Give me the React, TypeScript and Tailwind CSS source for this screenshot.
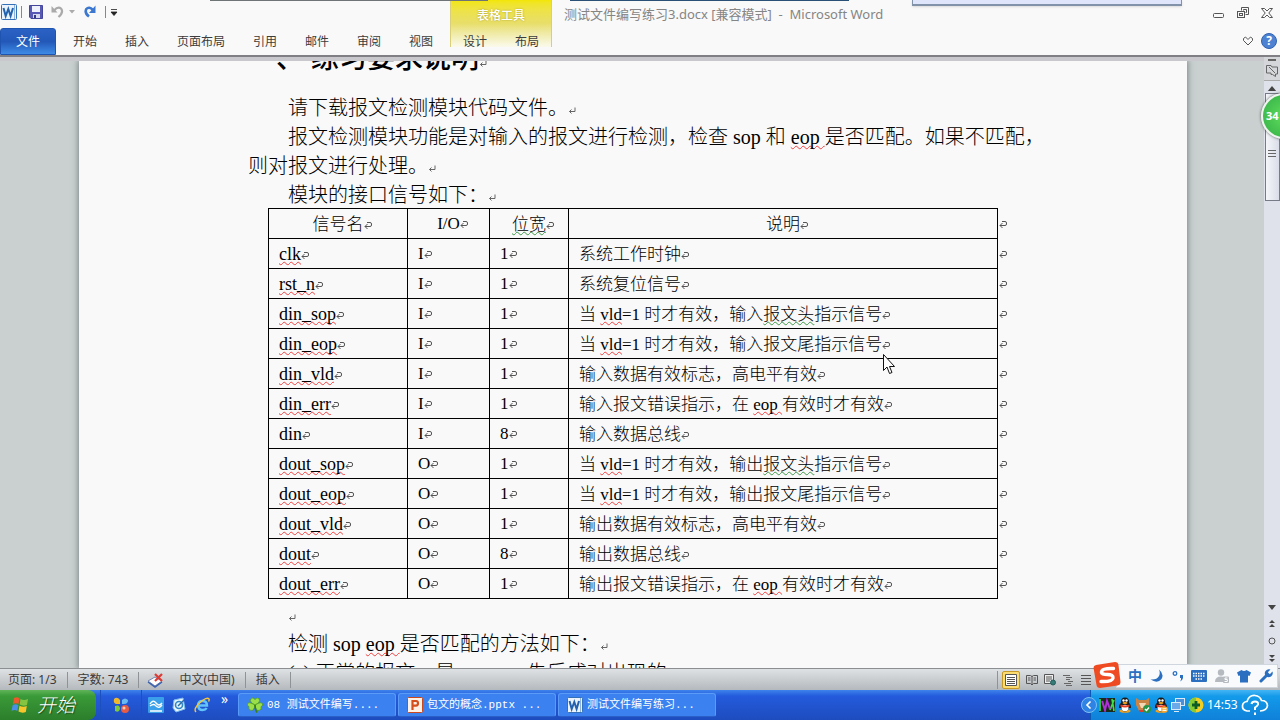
import React from "react";

type Mark = "red" | "green";
type Piece = string | { text: string; mark: Mark };

interface SignalRow {
  name: Piece;
  io: string;
  width: string;
  note: Piece[];
}

const vld: Piece = { text: "vld", mark: "red" };
const eop: Piece = { text: "eop ", mark: "red" };
const red = (text: string): Piece => ({ text, mark: "red" });
const head: Piece = { text: "报文头", mark: "green" };

const signals: SignalRow[] = [
  { name: red("clk"), io: "I", width: "1", note: ["系统工作时钟"] },
  { name: red("rst_n"), io: "I", width: "1", note: ["系统复位信号"] },
  { name: red("din_sop"), io: "I", width: "1", note: ["当 ", vld, "=1 时才有效，输入", head, "指示信号"] },
  { name: red("din_eop"), io: "I", width: "1", note: ["当 ", vld, "=1 时才有效，输入报文尾指示信号"] },
  { name: red("din_vld"), io: "I", width: "1", note: ["输入数据有效标志，高电平有效"] },
  { name: red("din_err"), io: "I", width: "1", note: ["输入报文错误指示，在 ", eop, "有效时才有效"] },
  { name: "din", io: "I", width: "8", note: ["输入数据总线"] },
  { name: red("dout_sop"), io: "O", width: "1", note: ["当 ", vld, "=1 时才有效，输出", head, "指示信号"] },
  { name: red("dout_eop"), io: "O", width: "1", note: ["当 ", vld, "=1 时才有效，输出报文尾指示信号"] },
  { name: red("dout_vld"), io: "O", width: "1", note: ["输出数据有效标志，高电平有效"] },
  { name: red("dout"), io: "O", width: "8", note: ["输出数据总线"] },
  { name: red("dout_err"), io: "O", width: "1", note: ["输出报文错误指示，在 ", eop, "有效时才有效"] },
];

const markStyles: Record<Mark, string> = {
  red: "underline decoration-wavy decoration-1 decoration-[#f04040] underline-offset-1 [text-decoration-skip-ink:none]",
  green: "underline decoration-wavy decoration-1 decoration-[#3f9a4a] underline-offset-1 [text-decoration-skip-ink:none]",
};

const Text = ({ piece }: { piece: Piece }) =>
  typeof piece === "string" ? <>{piece}</> : <span className={markStyles[piece.mark]}>{piece.text}</span>;

// Paragraph mark at the end of a line
const Return = () => (
  <svg viewBox="0 0 8 8" className="inline-block size-2 align-baseline" fill="none" stroke="#666">
    <path d="M7 0.5V4.5H1.5M3.5 2.5L1.5 4.5L3.5 6.5" />
  </svg>
);

// End-of-cell mark used inside tables
const CellMark = () => (
  <svg viewBox="0 0 8 8" className="inline-block size-2 align-baseline" fill="none" stroke="#555">
    <path d="M3 0.5H6Q7.5 0.5 7.5 2V3Q7.5 4.500 6 4.500H1M3.500 2L1 4.500L3.500 7" />
  </svg>
);

const WordIcon = () => (
  <svg viewBox="0 0 16 16" className="size-4 shrink-0">
    <rect x="0.5" y="0.5" width="15" height="15" rx="1" fill="#eaf2fb" stroke="#3470b8" />
    <path d="M13.500 1V15" stroke="#8db2de" />
    <path d="M2.500 4L4.700 12L7.300 5L9.600 12L12 4" fill="none" stroke="#2262ae" strokeWidth="2" />
  </svg>
);

const PowerPointIcon = () => (
  <svg viewBox="0 0 16 16" className="size-4 shrink-0">
    <rect x="0.5" y="0.5" width="15" height="15" rx="1" fill="#fff1e5" stroke="#c9481d" />
    <path d="M5.5 13V4H9Q11 4 11 6.3Q11 8.6 9 8.6H6" fill="none" stroke="#d4501e" strokeWidth="2.2" />
  </svg>
);

const CloverIcon = () => (
  <svg viewBox="0 0 16 16" className="size-4 shrink-0">
    <g fill="#9be04a" stroke="#4a9a1a" strokeWidth="0.7">
      <path d="M8 8Q2 5 3.800 2Q6 -0.500 8 2.500Q10 -0.500 12.200 2Q14 5 8 8Z" />
      <path d="M8 8Q1 4 0.500 7Q0 9 2 9.600Q1 13 4 13.400Q7 14 8 8Z" />
      <path d="M8 8Q15 4 15.500 7Q16 9 14 9.600Q15 13 12 13.400Q9 14 8 8Z" />
    </g>
    <path d="M8 8Q8 13 10 15.5" fill="none" stroke="#3b7d12" strokeWidth="1.5" />
  </svg>
);

const tabs = ["开始", "插入", "页面布局", "引用", "邮件", "审阅", "视图"];

const Tab = ({ label }: { label: string }) => (
  <button type="button" className="h-full px-[14px] text-xs text-[#3c3c3c]">
    {label}
  </button>
);

const Header = () => (
  <header className="relative flex h-[57px] shrink-0 border-b-2 border-[#808084] bg-[#f9f9f9] whitespace-nowrap">
    <div className="absolute top-0 left-[570px] h-px w-[279px] bg-[#2b5078]" />
    <div className="absolute top-0 left-[912px] h-1.5 w-[270px] border-x border-b-2 border-[#8292a8] bg-[#dfe5fb] shadow-sm" />

    <div className="flex w-[450px] shrink-0 flex-col">
      <div className="mb-1 flex h-6 items-center pl-px">
        <WordIcon />
        <span className="ml-1 h-3 w-px bg-[#888]" />
        <button type="button" aria-label="保存" className="ml-[7px]">
          <svg viewBox="0 0 14 14" className="size-[14px]">
            <path d="M0.5 0.5H13.5V13.5H2L0.5 12Z" fill="#5759b5" stroke="#44469a" />
            <path d="M3 1H11V7H3Z" fill="#eef0fb" />
            <path d="M4 9H11V13H4Z" fill="#d6d9ee" />
            <path d="M5 10H7V13H5Z" fill="#34367e" />
          </svg>
        </button>
        <button type="button" aria-label="撤消" className="ml-2">
          <svg viewBox="0 0 14 14" className="size-[14px]" fill="none" stroke="#aaa" strokeWidth="2.2">
            <path d="M3 5.5Q7 1 10 3.5Q13 7 7.5 12" />
            <path d="M0.5 1V7.5H6.5Z" fill="#aaa" stroke="none" />
          </svg>
        </button>
        <svg viewBox="0 0 6 4" className="ml-1 h-1 w-1.5"><path d="M0 0H6L3 3.5Z" fill="#aaa" /></svg>
        <button type="button" aria-label="恢复" className="ml-2">
          <svg viewBox="0 0 14 14" className="size-[14px]" fill="none" stroke="#3c78cf" strokeWidth="2.6">
            <path d="M10 5Q6 1 3.3 4Q1.3 8 6 11.5" />
            <path d="M12.5 0.5V8H6Z" fill="#3c78cf" stroke="none" />
          </svg>
        </button>
        <span className="ml-2 h-3 w-px bg-[#888]" />
        <button type="button" aria-label="自定义快速访问工具栏" className="ml-1">
          <svg viewBox="0 0 8 8" className="size-2"><path d="M1 1.5H7M1 4H7L4 7.5Z" fill="#222" stroke="#222" strokeWidth="0.8" /></svg>
        </button>
      </div>
      <div className="flex min-h-0 flex-1">
        <button
          type="button"
          className="mr-[3px] w-14 rounded-t-[3px] border border-[#1f55b0] bg-linear-to-b from-[#2a62c4] via-[#2358b8] to-[#3f8be6] text-xs text-white"
        >
          文件
        </button>
        <nav className="flex">
          {tabs.map((label) => (
            <Tab key={label} label={label} />
          ))}
        </nav>
      </div>
    </div>

    <div className="mb-2 flex w-[102px] shrink-0 flex-col border-x border-[#d9cf78] bg-linear-to-b from-[#f2e600] via-[#e8de6a] to-[#fbfaec]">
      <span className="h-7 shrink-0 pt-1 text-center text-xs leading-6 font-medium text-white [text-shadow:0_0_2px_#a69a2a]">表格工具</span>
      <div className="-mx-px flex h-[27px] shrink-0 justify-center">
        <Tab label="设计" />
        <Tab label="布局" />
      </div>
    </div>
    <div className="absolute top-0 left-[210px] h-px w-[278px] bg-[#6f7576]" />

    <h1 className="flex-1 pl-3 text-[13px] leading-7 text-[#858585]">测试文件编写练习3.docx [兼容模式]&nbsp; -&nbsp; Microsoft Word</h1>

    <div className="flex flex-col items-end pr-[3px]">
      <div className="mr-1 flex h-[26px] items-center gap-3">
        <button type="button" aria-label="最小化">
          <svg viewBox="0 0 12 12" className="size-3" fill="none" stroke="#555"><rect x="0.5" y="6.5" width="10" height="4" rx="1" /></svg>
        </button>
        <button type="button" aria-label="还原">
          <svg viewBox="0 0 12 12" className="size-3" fill="none" stroke="#555">
            <path d="M4.5 3.5V0.5H11.5V7.5H8.5M6.5 3.5V2.5H9.5V5.5H8.5" />
            <rect x="0.5" y="4.5" width="7" height="6" /><rect x="2.5" y="6.5" width="3" height="2" />
          </svg>
        </button>
        <button type="button" aria-label="关闭">
          <svg viewBox="0 0 12 12" className="size-3" fill="none" stroke="#555">
            <path d="M0.5 1.5H3.5L6 4L8.5 1.5H11.5L7.8 6L11.5 10.5H8.5L6 8L3.5 10.5H0.5L4.2 6Z" />
          </svg>
        </button>
      </div>
      <div className="flex flex-1 items-center gap-2">
        <button type="button" aria-label="功能区最小化">
          <svg viewBox="0 0 10 10" className="size-[10px]" fill="none" stroke="#555">
            <path d="M0.5 2.5L2.5 1L5 3.5L7.5 1L9.5 2.5V4.5L5 9L0.5 4.5Z" />
          </svg>
        </button>
        <button type="button" aria-label="帮助" className="size-4 rounded-full border border-[#2f62b0] bg-[#4d82d2] text-xs leading-[14px] font-bold text-white">
          ?
        </button>
      </div>
    </div>
  </header>
);

const SignalTable = () => (
  <table className="-mt-0.5 ml-5 border-collapse text-[17px] leading-none">
    <colgroup>
      <col className="w-[139px]" />
      <col className="w-[82px]" />
      <col className="w-[79px]" />
      <col className="w-[429px]" />
      <col className="w-3" />
    </colgroup>
    <thead>
      <tr className="h-[30px]">
        <th className="border border-black p-0 pt-0.5 pl-2 font-light">信号名<CellMark /></th>
        <th className="border border-black p-0 pl-2 font-light">I/O<CellMark /></th>
        <th className="border border-black p-0 pt-0.5 pl-2 font-light">
          <Text piece={{ text: "位宽", mark: "green" }} /><CellMark />
        </th>
        <th className="border border-black p-0 pt-0.5 pl-2 font-light">说明<CellMark /></th>
        <td className="p-0 pl-px"><CellMark /></td>
      </tr>
    </thead>
    <tbody>
      {signals.map((row, i) => (
        <tr key={i} className="h-[30px]">
          <td className="border border-black p-0 pl-[10px] text-lg leading-none"><Text piece={row.name} /><CellMark /></td>
          <td className="border border-black p-0 pl-[10px]">{row.io}<CellMark /></td>
          <td className="border border-black p-0 pl-[10px]">{row.width}<CellMark /></td>
          <td className="border border-black p-0 pt-0.5 pl-[10px]">
            {row.note.map((piece, n) => (
              <Text key={n} piece={piece} />
            ))}
            <CellMark />
          </td>
          <td className="p-0 pl-px"><CellMark /></td>
        </tr>
      ))}
    </tbody>
  </table>
);

const Document = () => (
  <article className="mr-[77px] ml-[79px] min-w-0 flex-1 overflow-hidden bg-[#f9f9f9] pl-[169px] font-['Liberation_Serif','Noto_Sans_CJK_SC',serif] text-xl leading-[29px] font-light whitespace-nowrap text-black shadow-[0_0_6px_1px_#7d8588]">
    <h2 className="-mt-4 mb-[21px] text-[28px] leading-7 font-medium">一、 练习要求说明<Return /></h2>
    <p className="indent-10">请下载报文检测模块代码文件。<Return /></p>
    <p className="indent-10">
      报文检测模块功能是对输入的报文进行检测，检查 sop 和 <Text piece={eop} />是否匹配。如果不匹配，
      <br />
      则对报文进行处理。<Return />
    </p>
    <p className="indent-10">模块的接口信号如下：<Return /></p>
    <SignalTable />
    <p className="mt-0.5 indent-10"><Return /></p>
    <p className="indent-10">检测 sop <Text piece={eop} />是否匹配的方法如下：<Return /></p>
    <p className="indent-10">(a) 正常的报文，是 sop eop 先后成对出现的</p>
  </article>
);

const ScrollBar = () => (
  <div className="relative flex w-4 shrink-0 flex-col items-center bg-[#dfe2ea]">
    <div className="flex h-6 w-full flex-col items-center gap-1 border-b border-[#aaa] bg-[#d5d6da] pt-0.5">
      <span className="h-0.5 w-2 shrink-0 bg-[#666]" />
      <svg viewBox="0 0 12 12" className="size-3 shrink-0" fill="none" stroke="#666">
        <path d="M0.5 0.5H5L6 2H11.5V9H9.5V11.5L6.5 9.5H5V8H0.5ZM3 2L9 8" />
      </svg>
    </div>
    <svg viewBox="0 0 10 6" className="mt-[5px] h-[5px] w-[10px]"><path d="M0 6L5 0L10 6Z" fill="#444" /></svg>
    <div className="mt-0.5 flex h-[108px] w-[15px] flex-col items-center justify-center gap-0.5 border border-[#777b88] bg-linear-to-r from-[#f5f6fa] to-[#d9dde8]">
      <span className="mt-3 h-px w-2 bg-[#666]" />
      <span className="h-px w-2 bg-[#666]" />
      <span className="h-px w-2 bg-[#666]" />
    </div>
    <div className="mt-auto flex flex-col items-center gap-[10px] pb-1.5">
      <svg viewBox="0 0 8 5" className="h-[5px] w-2"><path d="M0 0H8L4 5Z" fill="#444" /></svg>
      <svg viewBox="0 0 6 7" className="h-[7px] w-1.5"><path d="M0 3L3 0L6 3ZM0 7L3 4L6 7Z" fill="#444" /></svg>
      <svg viewBox="0 0 8 8" className="size-2" fill="none" stroke="#555"><circle cx="4" cy="4" r="3" /></svg>
      <svg viewBox="0 0 6 7" className="h-[7px] w-1.5"><path d="M0 0H6L3 3ZM0 4H6L3 7Z" fill="#444" /></svg>
    </div>
    <div className="absolute top-9 -left-[3px] flex h-[46px] w-[46px] items-center rounded-full border-2 border-[#eef4ee] bg-radial from-[#5fdc5c] to-[#2fae46] pl-[3px] text-[11px] font-bold text-white shadow-[0_0_3px_#555]">
      34
    </div>
  </div>
);

const StatusBar = () => (
  <footer className="flex h-[22px] shrink-0 items-center border-t border-[#8b8f92] bg-linear-to-b from-[#dfe2e4] to-[#b4b9bd] text-xs whitespace-nowrap text-[#3a3a3a]">
    <span className="pr-[10px] pl-2">页面: 1/3</span>
    <span className="border-x border-[#8f9397] px-[10px] leading-4">字数: 743</span>
    <svg viewBox="0 0 18 16" className="ml-2 h-4 w-[18px]">
      <path d="M1 9L8 5L15 9L8 14Z" fill="#fff" stroke="#7286b4" />
      <path d="M1 10L8 15L15 10" fill="none" stroke="#3c62ae" strokeWidth="1.5" />
      <path d="M8 2L15 9M15 2L8 9" stroke="#dd3b35" strokeWidth="2.2" />
    </svg>
    <span className="ml-3.5 border-r border-[#8f9397] pr-[10px] leading-4">中文(中国)</span>
    <span className="border-r border-[#8f9397] px-[10px] leading-4">插入</span>
    <div className="ml-auto flex items-center gap-1.5 border-l border-[#8f9397] pr-[188px] pl-1">
      <button type="button" aria-label="页面视图" className="flex size-[18px] items-center justify-center rounded-xs border border-[#c79a28] bg-[#fbdc73]">
        <svg viewBox="0 0 12 12" className="size-3" stroke="#555"><path d="M0.5 0.5H11.5V11.5H0.5Z" fill="#fff" /><path d="M2 3.5H10M2 5.5H10M2 7.5H10M2 9.5H10" /></svg>
      </button>
      <button type="button" aria-label="阅读版式视图">
        <svg viewBox="0 0 12 12" className="size-3" fill="none" stroke="#555"><path d="M0.5 1.5H4.5L6 2.5L7.5 1.5H11.5V9.5H7.5L6 11L4.5 9.5H0.5ZM6 2V10M2 4H4.5M2 6H4.5M7.5 4H10M7.5 6H10" /></svg>
      </button>
      <button type="button" aria-label="Web 版式视图">
        <svg viewBox="0 0 12 12" className="size-3" stroke="#555"><path d="M0.5 0.5H9.5V9.5H0.5Z" fill="#eee" /><path d="M2 3H8M2 5H8M2 7H6" /><circle cx="9" cy="8.5" r="2.5" fill="#357b78" stroke="#275d5b" /></svg>
      </button>
      <button type="button" aria-label="大纲视图">
        <svg viewBox="0 0 12 12" className="size-3" stroke="#666"><path d="M1 1.5H8M4 3.5H10M4 5.5H8M6 7.5H11M2 9.5H9M4 11.5H10" /></svg>
      </button>
      <button type="button" aria-label="草稿">
        <svg viewBox="0 0 12 12" className="size-3" stroke="#555"><path d="M1 1.5H11M1 4.5H11M1 7.5H11M1 10.5H11" /></svg>
      </button>
    </div>
  </footer>
);

// Floating input-method bar above the tray
const InputMethodBar = () => (
  <div className="absolute right-0.5 bottom-8 flex h-6 w-[162px] items-center justify-between border border-[#cfd6de] bg-[#f8fafc] pr-1 pl-[11px] text-[#2a6fc0]">
    <svg viewBox="0 0 28 28" className="absolute -top-1 -left-6 size-7">
      <path d="M3 4L22 1Q25 1 25.5 4L27.5 21Q27.500 24 24.500 24.500L7 27Q4 27 3.500 24L0.500 7Q0.500 4.500 3 4Z" fill="#ee4b22" />
      <path d="M20.500 7.500Q8 7 8.500 11.500Q9 13.500 14.500 13.500Q20.500 13.500 20 17Q19.500 21 8 20.500" fill="none" stroke="#fff" strokeWidth="3.400" strokeLinecap="round" />
    </svg>
    <span className="text-sm leading-none font-bold">中</span>
    <svg viewBox="0 0 14 14" className="size-[14px]"><path d="M9 0.500Q14.500 5 11.500 10Q7.500 15 0.500 10.500Q7 11 9 7Q10.500 4 9 0.500Z" fill="currentColor" /></svg>
    <svg viewBox="0 0 12 12" className="size-3"><circle cx="3" cy="3.500" r="1.800" fill="none" stroke="currentColor" strokeWidth="1.300" /><path d="M8 5H11V8Q10.500 10.500 8 11.500Q9.500 9.500 9 8H8Z" fill="currentColor" /></svg>
    <svg viewBox="0 0 16 12" className="h-3 w-4"><rect width="16" height="12" rx="1" fill="currentColor" /><path d="M2 3.500H14M2 6H14M4.500 9H11.500" stroke="#fff" strokeWidth="1.500" strokeDasharray="1.500 1" /></svg>
    <svg viewBox="0 0 14 14" className="size-[14px]" fill="#b5bac1"><circle cx="6" cy="3.500" r="3.200" /><path d="M0 13Q0 7.500 6 7.500Q8 7.500 9 8V13Z" /><rect x="8" y="7.500" width="6" height="6.500" rx="1" /><path d="M12.500 9H10V10.500H12.300V12.500H9.500" fill="none" stroke="#fff" /></svg>
    <svg viewBox="0 0 14 14" className="size-[14px]" fill="currentColor"><path d="M4.500 1Q7 3 9.500 1L14 3.500L12.500 7L11 6.500V13.500H3V6.500L1.500 7L0 3.500Z" /></svg>
    <svg viewBox="0 0 14 14" className="size-[14px]"><path d="M2 12L8 6" stroke="currentColor" strokeWidth="3" strokeLinecap="round" /><path d="M11.500 0.500L8.800 3.200L10.800 5.200L13.500 2.500Q14.500 5.500 12 7.500Q9.500 9 7.500 7.500L6.500 6.500Q5 4.500 6.500 2Q8.500 -0.500 11.500 0.500Z" fill="currentColor" /></svg>
  </div>
);

const Penguin = ({ badge }: { badge?: boolean }) => (
  <svg viewBox="0 0 14 16" className="h-4 w-3.5 shrink-0">
    <ellipse cx="7" cy="14" rx="5.500" ry="1.800" fill="#f0a01c" />
    <path d="M1 11Q1 7 3 6Q2.500 0.500 7 0.500Q11.500 0.500 11 6Q13 7 13 11L11 11Q10 14.500 7 14.500Q4 14.500 3 11Z" fill="#1a1a1a" />
    <ellipse cx="7" cy="11" rx="3.500" ry="3.300" fill="#fff" />
    <path d="M2.500 7.500Q7 9.500 11.500 7.500V9.500Q7 11.500 2.500 9.500Z" fill="#e23a23" />
    <circle cx="5.500" cy="3.500" r="1.200" fill="#fff" /><circle cx="8.500" cy="3.500" r="1.200" fill="#fff" />
    <ellipse cx="7" cy="6" rx="2.500" ry="1" fill="#f5a71c" />
    {badge && <><circle cx="10.500" cy="12.500" r="3.300" fill="#f5a733" /><path d="M8.500 11.800H12.500M8.500 13.500H12.500" stroke="#fff" /></>}
  </svg>
);

const tasks = [
  { label: "08 测试文件编写....", icon: <CloverIcon /> },
  { label: "包文的概念.pptx ...", icon: <PowerPointIcon /> },
  { label: "测试文件编写练习...", icon: <WordIcon /> },
];

const Taskbar = () => (
  <div className="flex h-[30px] shrink-0 items-stretch bg-linear-to-b from-[#3f83ec] via-[#245bdc] via-20% to-[#1d4cbe] whitespace-nowrap text-white">
    <button
      type="button"
      className="flex w-24 items-center gap-2 rounded-r-lg bg-linear-to-b from-[#5fb558] via-[#3a9a38] via-20% to-[#2c7e2b] pl-[11px] text-[19px] font-light italic [text-shadow:1px_1px_1px_#1c4a1a]"
    >
      <svg viewBox="0 0 18 18" className="size-[18px]">
        <path d="M3 2Q6 0.500 8.500 2.500L7.500 8Q5 6.500 2 8Z" fill="#ee5a2c" />
        <path d="M9.500 3Q13 5 17 3L16 9Q12 10.500 8.700 8.500Z" fill="#85c440" />
        <path d="M1.700 9Q4.500 7.500 7.300 9.200L6.300 15Q3.500 13 0.500 15Z" fill="#4a8fe8" />
        <path d="M8.500 9.700Q12 11.500 15.800 10L14.800 16Q11 17.500 7.500 15.500Z" fill="#f8c62c" />
      </svg>
      开始
    </button>
    <div className="ml-1 flex items-center border-x border-[#1b50bd] px-[11px]">
      <svg viewBox="0 0 18 18" className="size-[18px]">
        <path d="M2 3Q5 0 8 4V8H4Q1 7 2 3Z" fill="#f1b82c" /><path d="M10 4Q13 1 16 4Q16 8 12 8H10Z" fill="#68b8f2" />
        <path d="M3 10Q8 8 8 13Q7 17 3 15Z" fill="#7dc73d" /><circle cx="13" cy="13" r="4" fill="#e65b44" /><circle cx="12" cy="12" r="1.500" fill="#ffd0b8" />
      </svg>
    </div>
    <div className="flex items-center gap-[7px] pl-1.5">
      <svg viewBox="0 0 16 16" className="size-4"><rect width="16" height="16" rx="1" fill="#3ba0ea" /><path d="M2 7Q5 2 8 6Q11 10 14 6M2 9Q6 6 8 9Q11 12 14 8M2 14H14" fill="none" stroke="#fff" strokeWidth="1.300" /></svg>
      <svg viewBox="0 0 16 16" className="size-4"><path d="M3 3L12 1L14 12L5 15L2 11Z" fill="#e8f5fc" stroke="#7dbcec" /><circle cx="8" cy="8" r="3.500" fill="none" stroke="#2f87c8" strokeWidth="1.600" /><path d="M7 9L13 3" stroke="#286da4" strokeWidth="1.500" /></svg>
      <svg viewBox="0 0 16 16" className="size-4" fill="none"><path d="M4 8.500H13Q13 4 8.500 4Q4 4 4 8.500Q4.500 13 8.500 13Q11.500 13 12.700 11" stroke="#62c4fa" strokeWidth="2.400" /><path d="M2 15Q-1 12 6 5.500Q13 -0.500 15 2Q15.500 3 14.500 4.500" stroke="#f5c63a" strokeWidth="1.400" /></svg>
      <span className="-mt-3 ml-1 w-[9px] text-sm leading-none">»</span>
    </div>
    <div className="ml-2 flex items-center gap-0.5">
      {tasks.map((task) => (
        <button
          key={task.label}
          type="button"
          className="flex h-6 w-[158px] items-center gap-1 rounded-[3px] border border-[#5b9bf8] border-b-[#2a5fc8] bg-[#3c81f0] pl-2 font-['Liberation_Mono','Noto_Sans_CJK_SC',monospace] text-[11px]"
        >
          {task.icon}
          {task.label}
        </button>
      ))}
    </div>
    <div className="relative ml-auto flex w-[190px] items-center gap-[3px] border-l border-[#0c58b0] bg-linear-to-b from-[#41b6f5] via-[#139bea] via-20% to-[#1080d8] pl-2">
      <button type="button" aria-label="显示隐藏的图标" className="absolute top-[7px] -left-[10px] flex size-4 items-center justify-center rounded-full border border-[#7cc1f4] bg-[#2f83e4]">
        <svg viewBox="0 0 8 8" className="size-2" fill="none" stroke="#fff" strokeWidth="1.600"><path d="M5.500 0.500L2 4L5.500 7.500" /></svg>
      </button>
      <svg viewBox="0 0 16 14" className="h-3.5 w-4 shrink-0"><rect width="16" height="14" fill="#1c2a1e" /><path d="M1 1V13M13 1L15 13M11 12L15 2" stroke="#3ee04a" strokeWidth="1.600" /><path d="M3 3L6 12L8 3L11 11" fill="none" stroke="#b030d8" strokeWidth="2" /></svg>
      <Penguin />
      <svg viewBox="0 0 16 16" className="size-4 shrink-0"><path d="M1 1L4 3H11L14 1V8L12 14H4L1 8Z" fill="#c98345" /><path d="M4 6H11L9 11H6Z" fill="#f3d6b4" /><path d="M4 13H10V15H4Z" fill="#d9402e" /><circle cx="12" cy="12" r="4" fill="#259447" /><path d="M10 12L11.500 13.500L14 10.500" fill="none" stroke="#fff" strokeWidth="1.400" /></svg>
      <Penguin badge />
      <svg viewBox="0 0 14 14" className="size-3.5 shrink-0" stroke="#d9ebfa"><rect x="4.500" y="0.500" width="9" height="7" fill="#4b8fd9" /><rect x="0.500" y="4.500" width="9" height="7" fill="#6ba9e8" /><path d="M3 13.500H8" /></svg>
      <svg viewBox="0 0 16 16" className="size-4 shrink-0"><circle cx="8" cy="8" r="7.500" fill="#f2cf26" /><path d="M8 0.500A7.500 7.500 0 0 0 8 15.500Z" fill="#83cc33" /><path d="M8 4V12M4 8H12" stroke="#0d5c26" strokeWidth="2.800" /></svg>
      <time className="shrink-0 text-xs">14:53</time>
      <svg viewBox="0 0 28 22" className="h-[22px] w-7 shrink-0" fill="none" stroke="#fff" strokeWidth="1.700">
        <path d="M9 17H6Q1 16 1.500 11.500Q2 8 6 7.500Q8 1 14 1.500Q19 2 20.500 6.500Q26 6.500 26.500 11.500Q26 16.500 19 17" />
        <path d="M10.500 10Q11 7.500 14 7.500Q17.500 7.500 17 10.500Q16.500 12 14 13.500V16M14 18.500V21" strokeWidth="2" />
      </svg>
    </div>
  </div>
);

export default function App() {
  return (
    <div className="relative flex h-screen flex-col overflow-hidden bg-[#c9d0cf] font-['Noto_Sans','Noto_Sans_CJK_SC',sans-serif]">
      <Header />
      <main className="relative flex min-h-0 flex-1">
        <div className="flex min-w-0 flex-1 overflow-hidden border-t-4 border-[#c9c9cd]">
          <Document />
        </div>
        <ScrollBar />
        {/* mouse pointer */}
        <svg viewBox="0 0 12 21" className="absolute top-[297px] left-[883px] h-[21px] w-3">
          <path d="M0.500 0.500V16.500L4 13L6.500 19.500L9 18.500L6.500 12.500H11.500Z" fill="#fff" stroke="#111" />
        </svg>
      </main>
      <StatusBar />
      <Taskbar />
      <InputMethodBar />
    </div>
  );
}
